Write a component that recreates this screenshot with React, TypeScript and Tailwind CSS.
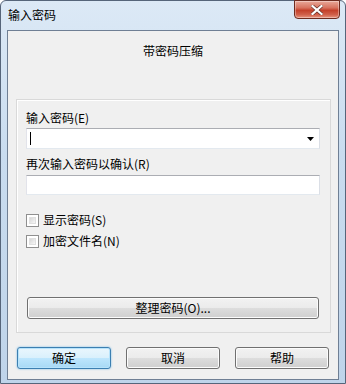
const font = { fontFamily: '"Noto Sans CJK SC", "Noto Sans", sans-serif' };

function Win7Button({ label, primary = false, className = "" }: { label: string; primary?: boolean; className?: string }) {
  return (
    <div
      className={
        "flex h-[22px] items-center justify-center rounded-[3px] border text-[12px] leading-none text-black " +
        (primary
          ? "border-[#3c7fb1] bg-[linear-gradient(to_bottom,#eaf6fd_0%,#d9f0fc_50%,#bee6fd_50%,#a7d9f5_100%)] shadow-[inset_0_0_0_1px_#b7e3fb,0_0_2px_#69b6e8] "
          : "border-[#707070] bg-[linear-gradient(to_bottom,#f2f2f2_0%,#ebebeb_50%,#dddddd_50%,#cfcfcf_100%)] shadow-[inset_0_0_0_1px_#fcfcfc] ") +
        className
      }
    >
      {label}
    </div>
  );
}

function Checkbox({ label }: { label: string }) {
  return (
    <div className="flex h-[16px] items-center gap-[4px]">
      <div className="h-[13px] w-[13px] border border-[#8f8f8f] bg-white p-[2px]">
        <div className="h-full w-full bg-[linear-gradient(135deg,#d6d6d6,#f7f7f7)] border border-[#e0e0e0]" />
      </div>
      <span className="text-[12px] leading-[16px] text-black">{label}</span>
    </div>
  );
}

export default function App() {
  return (
    <div style={font} className="h-[384px] w-[346px] overflow-hidden bg-white">
      <div className="flex h-[384px] w-[346px] flex-col rounded-t-[6px] border border-[#56657a] bg-[linear-gradient(to_bottom,#dce9f6_0%,#c9dcef_40%,#bfd4ea_100%)]">
        {/* title bar */}
        <div className="flex h-[29px] items-start justify-between">
          <span className="pl-[7px] pt-[6px] text-[12px] leading-[16px] text-black">输入密码</span>
          <div className="mr-[5px] mt-[-1px] flex h-[19px] w-[46px] items-center justify-center rounded-b-[4px] border border-[#6d2b1f] bg-[linear-gradient(to_bottom,#e9a99a_0%,#d7735f_40%,#c4402a_55%,#d0604a_80%,#e8957f_100%)] shadow-[inset_0_0_0_1px_rgba(255,255,255,0.35)]">
            <svg width="12" height="10" viewBox="0 0 12 10">
              <path d="M1.5 1 L10.5 9 M10.5 1 L1.5 9" stroke="#5a2a22" strokeWidth="3.4" strokeLinecap="square" />
              <path d="M1.5 1 L10.5 9 M10.5 1 L1.5 9" stroke="#ffffff" strokeWidth="2.2" strokeLinecap="square" />
            </svg>
          </div>
        </div>

        {/* client area */}
        <div className="mx-[6px] mb-[3px] flex flex-1 flex-col border border-[#6f7f94] bg-[#f0f0f0]">
          <div className="pt-[12px] text-center text-[12px] leading-[16px] text-black">带密码压缩</div>

          <div className="ml-[8px] mt-[40px] flex w-[315px] flex-col border border-[#d9d9d9] pb-[13px] pl-[9px] shadow-[inset_1px_1px_0_#ffffff]">
            <div className="mt-[10px] text-[12px] leading-[16px] text-black">输入密码(E)</div>
            <div className="mt-[2px] flex h-[21px] w-[294px] items-center justify-between border border-[#abadb3] border-b-[#e3e9ef] border-l-[#e2e3ea] border-r-[#dbdfe6] bg-white pl-[3px] pr-[5px]">
              <div className="h-[13px] w-px bg-black" />
              <svg width="7" height="4" viewBox="0 0 7 4">
                <path d="M0 0 H7 L3.5 4 Z" fill="#000" />
              </svg>
            </div>
            <div className="mt-[7px] text-[12px] leading-[16px] text-black">再次输入密码以确认(R)</div>
            <div className="mt-[3px] h-[20px] w-[294px] border border-[#abadb3] border-b-[#e3e9ef] border-l-[#e2e3ea] border-r-[#dbdfe6] bg-white" />

            <div className="mt-[17px]">
              <Checkbox label="显示密码(S)" />
            </div>
            <div className="mt-[5px]">
              <Checkbox label="加密文件名(N)" />
            </div>

            <Win7Button label="整理密码(O)..." className="ml-[1px] mt-[48px] h-[21px] w-[292px]" />
          </div>

          <div className="mt-[14px] flex justify-between px-[9px]">
            <Win7Button label="确定" primary className="w-[94px]" />
            <Win7Button label="取消" className="w-[94px]" />
            <Win7Button label="帮助" className="w-[94px]" />
          </div>
        </div>
      </div>
    </div>
  );
}
